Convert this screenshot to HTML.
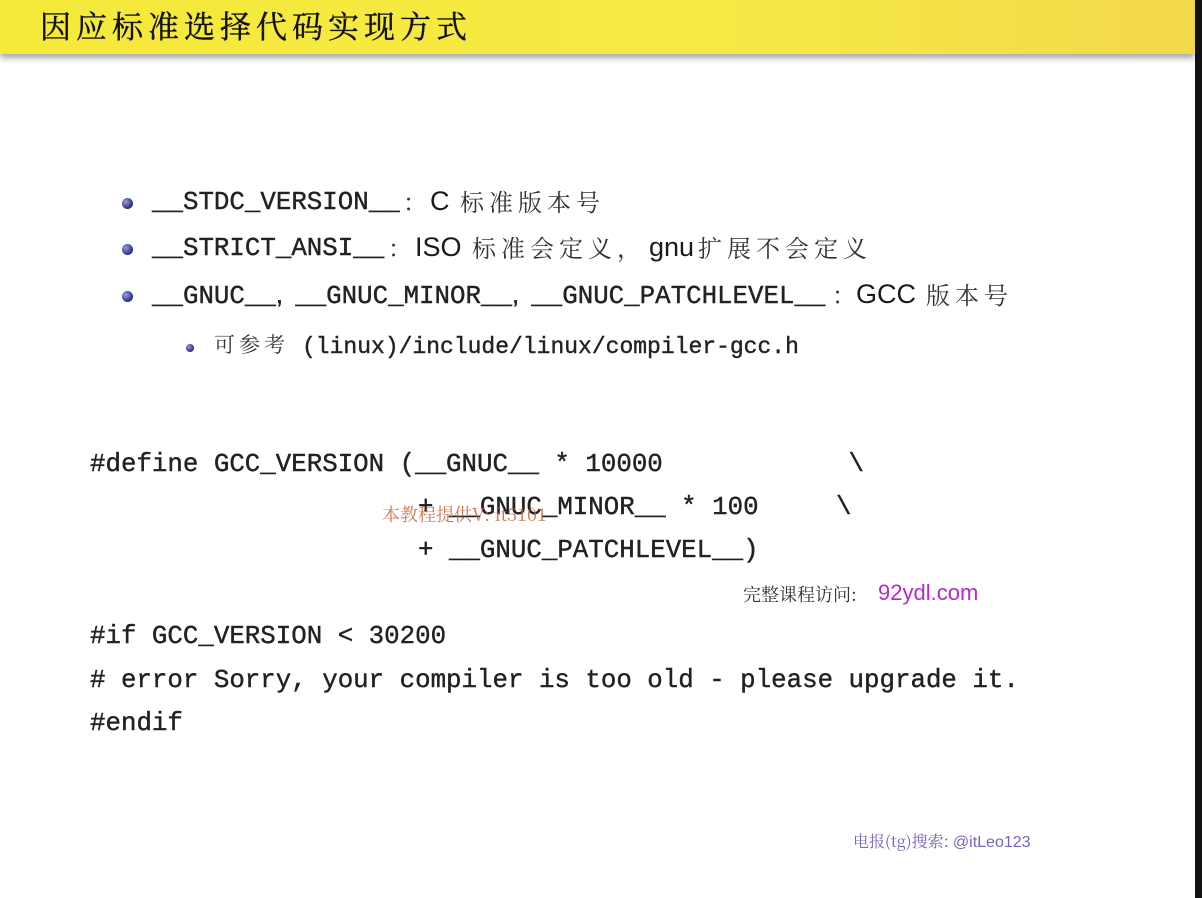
<!DOCTYPE html>
<html><head><meta charset="utf-8"><style>
body{margin:0;width:1202px;height:898px;background:#fff;position:relative;overflow:hidden;font-family:"Liberation Sans","Noto Sans CJK SC",sans-serif;color:#1a1a1a}
.hdr{position:absolute;left:0;top:0;width:1195px;height:54px;background:linear-gradient(90deg,#f5e93a,#f7ea45 60%,#f2d84a);box-shadow:0 4px 6px rgba(0,0,0,.35)}
.rb{position:absolute;right:0;top:0;width:7px;height:898px;background:#111}
.t{position:absolute;white-space:pre;line-height:1}
.m{font-family:"Liberation Mono","Noto Sans CJK SC",monospace;font-size:25.8px;color:#222;-webkit-text-stroke:0.4px #222}
.c{font-family:"Noto Serif CJK SC","Noto Sans CJK SC",serif;font-size:24px;letter-spacing:5px;color:#333}
.b{position:absolute;width:11px;height:11px;border-radius:50%;background:radial-gradient(circle at 35% 35%,#9a9ae0,#2a2a80 70%)}
.sb{width:8px;height:8px}
.cm{font-family:'Liberation Sans';margin-right:5px}
</style></head><body>
<div class="hdr"></div>
<div class="t" style="left:40px;top:9px;font-family:'Noto Serif CJK SC',serif;font-size:31px;letter-spacing:5px;color:#111;-webkit-text-stroke:0.4px #111">因应标准选择代码实现方式</div>
<div class="rb"></div>

<div class="b" style="left:122px;top:198px"></div>
<div class="t m" style="left:152px;top:190px">__STDC_VERSION__</div>
<div class="t c" style="left:403px;top:189px">：</div>
<div class="t" style="left:430px;top:188px;font-size:27px">C</div>
<div class="t c" style="left:460px;top:189px">标准版本号</div>

<div class="b" style="left:122px;top:244px"></div>
<div class="t m" style="left:152px;top:236px">__STRICT_ANSI__</div>
<div class="t c" style="left:388px;top:235px">：</div>
<div class="t" style="left:415px;top:234px;font-size:27px">ISO</div>
<div class="t c" style="left:472px;top:235px">标准会定义，</div>
<div class="t" style="left:649px;top:234px;font-size:27px">gnu</div>
<div class="t c" style="left:698px;top:235px">扩展不会定义</div>

<div class="b" style="left:122px;top:291px"></div>
<div class="t m" style="left:152px;top:283px">__GNUC__<span class="cm">, </span>__GNUC_MINOR__<span class="cm">, </span>__GNUC_PATCHLEVEL__</div>
<div class="t c" style="left:832px;top:282px">：</div>
<div class="t" style="left:856px;top:281px;font-size:27px">GCC</div>
<div class="t c" style="left:926px;top:282px">版本号</div>

<div class="b sb" style="left:186px;top:344px"></div>
<div class="t c" style="left:214px;top:334px;font-size:21px;letter-spacing:4px">可参考</div>
<div class="t m" style="left:302px;top:336px;font-size:23px">(linux)/include/linux/compiler-gcc.h</div>

<div class="t m" style="left:90px;top:452px">#define GCC_VERSION (__GNUC__ * 10000            \</div>
<div class="t m" style="left:418px;top:495px">+ __GNUC_MINOR__ * 100     \</div>
<div class="t m" style="left:418px;top:538px">+ __GNUC_PATCHLEVEL__)</div>
<div class="t" style="left:382px;top:505px;font-family:'Noto Serif CJK SC',serif;font-size:18px;color:#c8603a;opacity:.85">本教程提供V: it5101</div>
<div class="t" style="left:743px;top:585px;font-family:'Noto Serif CJK SC',serif;font-size:18px;color:#333">完整课程访问:</div>
<div class="t" style="left:878px;top:582px;font-size:22px;color:#b02cc8">92ydl.com</div>

<div class="t m" style="left:90px;top:624px">#if GCC_VERSION &lt; 30200</div>
<div class="t m" style="left:90px;top:668px"># error Sorry, your compiler is too old - please upgrade it.</div>
<div class="t m" style="left:90px;top:711px">#endif</div>

<div class="t" style="left:853px;top:833px;font-family:'Noto Serif CJK SC',serif;font-size:16px;color:#7a62b8">电报(tg)搜索: <span style="font-family:'Liberation Sans',sans-serif">@itLeo123</span></div>
</body></html>
